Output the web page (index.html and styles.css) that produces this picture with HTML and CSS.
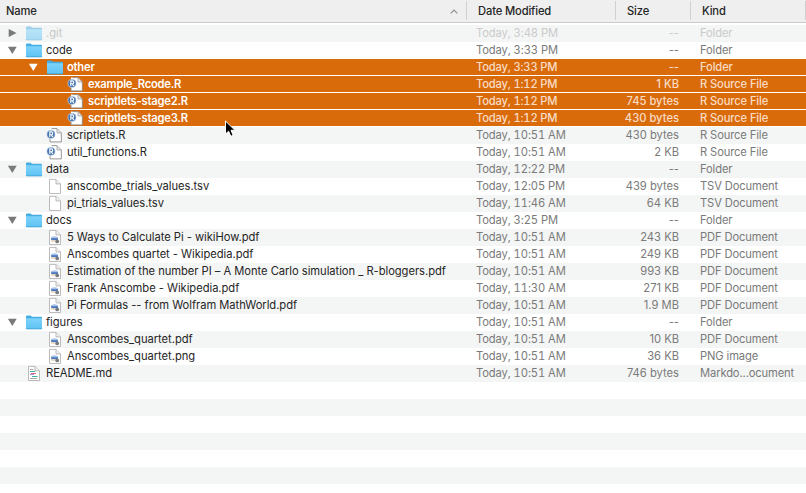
FILE: index.html
```html
<!DOCTYPE html>
<html lang="en">
<head>
<meta charset="utf-8">
<title>Files</title>
<link rel="stylesheet" href="styles.css">
</head>
<body>
<svg class="defs" width="0" height="0">
  <defs>
    <linearGradient id="blue" x1="0" y1="0" x2="0" y2="1"><stop offset="0" stop-color="#7dd3fb"/><stop offset="1" stop-color="#5fc3f4"/></linearGradient>
    <symbol id="folder" viewBox="0 0 18 16">
      <path d="M1 14.4V2.6Q1 1.6 2 1.6H5.6L7 2.8H16Q17 2.8 17 3.8V14.4Z" fill="#45ade0"/>
      <path d="M1 4.2H17V14Q17 14.9 16 14.9H2Q1 14.9 1 14Z" fill="url(#blue)"/>
      <path d="M1 14.2Q1.2 14.9 2 14.9H16Q16.8 14.9 17 14.2" fill="none" stroke="#3e9fd2" stroke-width=".8"/>
    </symbol>
    <symbol id="page" viewBox="0 0 18 16">
      <path d="M3.5 1.4H10L14.5 5.9V15.5H3.5Z" fill="#fff" stroke="#b3b3b3" stroke-width=".9"/>
      <path d="M10 1.4V5.9H14.5" fill="#f2f2f2" stroke="#aaa" stroke-width=".8"/>
    </symbol>
    <symbol id="rfile" viewBox="0 0 18 16">
      <path d="M4 1.6H11L15.3 5.9V14.9H4Z" fill="#fff"/>
      <path d="M5.5 1.6H11M15.3 5.9V14.9H4V11.5" fill="none" stroke="#8a8a8a" stroke-width=".9"/>
      <path d="M11 1.6V5.9H15.3Z" fill="#eee" stroke="#999" stroke-width=".8"/>
      <circle cx="5" cy="7.4" r="4.1" fill="#4675b0" stroke="#dce6f1" stroke-width=".6"/>
      <path d="M3.8 10.1V4.9H5.3Q6.7 4.9 6.7 6.3T5.3 7.7H3.8M5.3 7.7L6.9 10.1" fill="none" stroke="#fff" stroke-width="1.1"/>
    </symbol>
    <symbol id="image" viewBox="0 0 18 16">
      <use href="#page"/>
      <path d="M5 8.2Q8.5 6.2 12 8.2V10H5Z" fill="#a9c3e9"/>
      <path d="M5.2 9.2H12V11.2H5.2Z" fill="#4b78c0"/>
      <path d="M5.2 11.2H9V12.7H5.2Z" fill="#e6cfb0"/>
      <circle cx="11.2" cy="12.4" r="1.9" fill="#777b80"/>
    </symbol>
    <symbol id="markdown" viewBox="0 0 18 16">
      <use href="#page"/>
      <path d="M5 4.5H8.5M5 13.5H12" stroke="#aaa"/>
      <path d="M5 6.5H10M7 11.5H12.5" stroke="#39afa9"/>
      <path d="M6 8.5H11" stroke="#ed627a"/><path d="M5 9.5H9" stroke="#8578d8" stroke-width=".8"/>
    </symbol>
    <symbol id="down" viewBox="0 0 10 8"><path d="M.9 .7H9.7L5.3 8Z" fill="currentColor"/></symbol>
    <symbol id="right" viewBox="0 0 10 8"><path d="M1.7 0V8L9.5 4Z" fill="currentColor"/></symbol>
  </defs>
</svg>
<main class="finder">
  <header class="row head"><div class="name">Name<svg class="sort" viewBox="0 0 8 5"><path d="M.7 4.3L4 1L7.3 4.3" fill="none" stroke="#8c8c8c" stroke-width="1.1"/></svg></div><div class="date">Date Modified</div><div class="size">Size</div><div class="kind">Kind</div></header>
  <section class="list">
    <div class="row dim"><div class="name l0"><svg class="tri"><use href="#right"/></svg><svg class="icon"><use href="#folder"/></svg><span>.git</span></div><div class="date">Today, 3:48 PM</div><div class="size">--</div><div class="kind">Folder</div></div>
    <div class="row"><div class="name l0"><svg class="tri"><use href="#down"/></svg><svg class="icon"><use href="#folder"/></svg><span>code</span></div><div class="date">Today, 3:33 PM</div><div class="size">--</div><div class="kind">Folder</div></div>
    <div class="row selected"><div class="name l1"><svg class="tri"><use href="#down"/></svg><svg class="icon"><use href="#folder"/></svg><span>other</span></div><div class="date">Today, 3:33 PM</div><div class="size">--</div><div class="kind">Folder</div></div>
    <div class="row selected"><div class="name l2"><i class="tri"></i><svg class="icon"><use href="#rfile"/></svg><span>example_Rcode.R</span></div><div class="date">Today, 1:12 PM</div><div class="size">1 KB</div><div class="kind">R Source File</div></div>
    <div class="row selected"><div class="name l2"><i class="tri"></i><svg class="icon"><use href="#rfile"/></svg><span>scriptlets-stage2.R</span></div><div class="date">Today, 1:12 PM</div><div class="size">745 bytes</div><div class="kind">R Source File</div></div>
    <div class="row selected"><div class="name l2"><i class="tri"></i><svg class="icon"><use href="#rfile"/></svg><span>scriptlets-stage3.R</span></div><div class="date">Today, 1:12 PM</div><div class="size">430 bytes</div><div class="kind">R Source File</div></div>
    <div class="row"><div class="name l1"><i class="tri"></i><svg class="icon"><use href="#rfile"/></svg><span>scriptlets.R</span></div><div class="date">Today, 10:51 AM</div><div class="size">430 bytes</div><div class="kind">R Source File</div></div>
    <div class="row"><div class="name l1"><i class="tri"></i><svg class="icon"><use href="#rfile"/></svg><span>util_functions.R</span></div><div class="date">Today, 10:51 AM</div><div class="size">2 KB</div><div class="kind">R Source File</div></div>
    <div class="row"><div class="name l0"><svg class="tri"><use href="#down"/></svg><svg class="icon"><use href="#folder"/></svg><span>data</span></div><div class="date">Today, 12:22 PM</div><div class="size">--</div><div class="kind">Folder</div></div>
    <div class="row"><div class="name l1"><i class="tri"></i><svg class="icon"><use href="#page"/></svg><span>anscombe_trials_values.tsv</span></div><div class="date">Today, 12:05 PM</div><div class="size">439 bytes</div><div class="kind">TSV Document</div></div>
    <div class="row"><div class="name l1"><i class="tri"></i><svg class="icon"><use href="#page"/></svg><span>pi_trials_values.tsv</span></div><div class="date">Today, 11:46 AM</div><div class="size">64 KB</div><div class="kind">TSV Document</div></div>
    <div class="row"><div class="name l0"><svg class="tri"><use href="#down"/></svg><svg class="icon"><use href="#folder"/></svg><span>docs</span></div><div class="date">Today, 3:25 PM</div><div class="size">--</div><div class="kind">Folder</div></div>
    <div class="row"><div class="name l1"><i class="tri"></i><svg class="icon"><use href="#image"/></svg><span>5 Ways to Calculate Pi - wikiHow.pdf</span></div><div class="date">Today, 10:51 AM</div><div class="size">243 KB</div><div class="kind">PDF Document</div></div>
    <div class="row"><div class="name l1"><i class="tri"></i><svg class="icon"><use href="#image"/></svg><span>Anscombes quartet - Wikipedia.pdf</span></div><div class="date">Today, 10:51 AM</div><div class="size">249 KB</div><div class="kind">PDF Document</div></div>
    <div class="row"><div class="name l1"><i class="tri"></i><svg class="icon"><use href="#image"/></svg><span>Estimation of the number PI – A Monte Carlo simulation _ R-bloggers.pdf</span></div><div class="date">Today, 10:51 AM</div><div class="size">993 KB</div><div class="kind">PDF Document</div></div>
    <div class="row"><div class="name l1"><i class="tri"></i><svg class="icon"><use href="#image"/></svg><span>Frank Anscombe - Wikipedia.pdf</span></div><div class="date">Today, 11:30 AM</div><div class="size">271 KB</div><div class="kind">PDF Document</div></div>
    <div class="row"><div class="name l1"><i class="tri"></i><svg class="icon"><use href="#image"/></svg><span>Pi Formulas -- from Wolfram MathWorld.pdf</span></div><div class="date">Today, 10:51 AM</div><div class="size">1.9 MB</div><div class="kind">PDF Document</div></div>
    <div class="row"><div class="name l0"><svg class="tri"><use href="#down"/></svg><svg class="icon"><use href="#folder"/></svg><span>figures</span></div><div class="date">Today, 10:51 AM</div><div class="size">--</div><div class="kind">Folder</div></div>
    <div class="row"><div class="name l1"><i class="tri"></i><svg class="icon"><use href="#image"/></svg><span>Anscombes_quartet.pdf</span></div><div class="date">Today, 10:51 AM</div><div class="size">10 KB</div><div class="kind">PDF Document</div></div>
    <div class="row"><div class="name l1"><i class="tri"></i><svg class="icon"><use href="#image"/></svg><span>Anscombes_quartet.png</span></div><div class="date">Today, 10:51 AM</div><div class="size">36 KB</div><div class="kind">PNG image</div></div>
    <div class="row"><div class="name l0"><i class="tri"></i><svg class="icon"><use href="#markdown"/></svg><span>README.md</span></div><div class="date">Today, 10:51 AM</div><div class="size">746 bytes</div><div class="kind">Markdo...ocument</div></div>
    <div class="row"></div><div class="row"></div><div class="row"></div><div class="row"></div><div class="row"></div><div class="row"></div>
  </section>
  <svg class="cursor" viewBox="0 0 13 18"><path d="M1.5 1V14L4.6 11.2L6.8 16.3L9.2 15.3L7 10.3H11Z" fill="#000" stroke="#fff" stroke-width="1"/></svg>
</main>
</body>
</html>
```
FILE: styles.css
```css
body { margin: 0; background: #fff; }
.defs { position: absolute; }
.finder {
  position: relative;
  width: 806px;
  height: 493px;
  overflow: hidden;
  font: 11.2px/16px Inter, "Liberation Sans", sans-serif;
  letter-spacing: -0.04px;
  color: #262626;
}
.row {
  display: grid;
  grid-template-columns: 466px 149px 75px 116px;
  height: 17px;
  white-space: nowrap;
}
.list { padding-top: 2px; }
.list .row:nth-child(odd) { background: #f4f5f5; }
.list .date, .list .size, .list .kind { color: #7a7a7a; }
.list .date { letter-spacing: -0.1px; font-variant-numeric: tabular-nums; }
.list .size { letter-spacing: 0; }
.list .kind { letter-spacing: -0.13px; }
.name { display: flex; align-items: center; height: 16px; }
.l0 { padding-left: 7px; }
.l1 { padding-left: 28px; }
.l2 { padding-left: 49px; }
.tri { width: 10px; height: 8px; margin-right: 8px; color: #7a7a7a; flex: none; }
.icon { width: 18px; height: 16px; margin-right: 3px; flex: none; }
.date { padding-left: 10px; }
.size { text-align: right; padding-right: 11px; }
.kind { padding-left: 10px; }
.list .selected.row { background: #d96b0b; box-shadow: inset 0 -1px #fff; font-weight: 600; color: #fff; letter-spacing: -0.21px; }
.selected .tri { color: #fff; }
.list .selected .date, .list .selected .size, .list .selected .kind { color: #fadcc4; font-weight: 500; }
.list .selected .date { letter-spacing: -0.18px; }
.dim .icon { opacity: .5; }
.dim .name span { color: #c8c8c8; }
.list .dim .date, .list .dim .size, .list .dim .kind { color: #cbcbcb; }
.head { height: 22px; line-height: 22px; background: #efefef; border-bottom: 1px solid #cbcbcb; font-weight: 500; letter-spacing: -0.14px; }
.head .name { height: 22px; padding-left: 6px; justify-content: space-between; }
.sort { width: 8px; height: 5px; margin-right: 8px; }
.head .date, .head .size, .head .kind { border-left: 1px solid #d0d0d0; height: 19px; line-height: 20px; margin-top: 1px; padding-left: 11px; }
.head .size { text-align: left; padding-right: 0; }
.head .kind { border-right: 1px solid #d0d0d0; }
.cursor { position: absolute; left: 224px; top: 120px; width: 13px; height: 18px; }
```
